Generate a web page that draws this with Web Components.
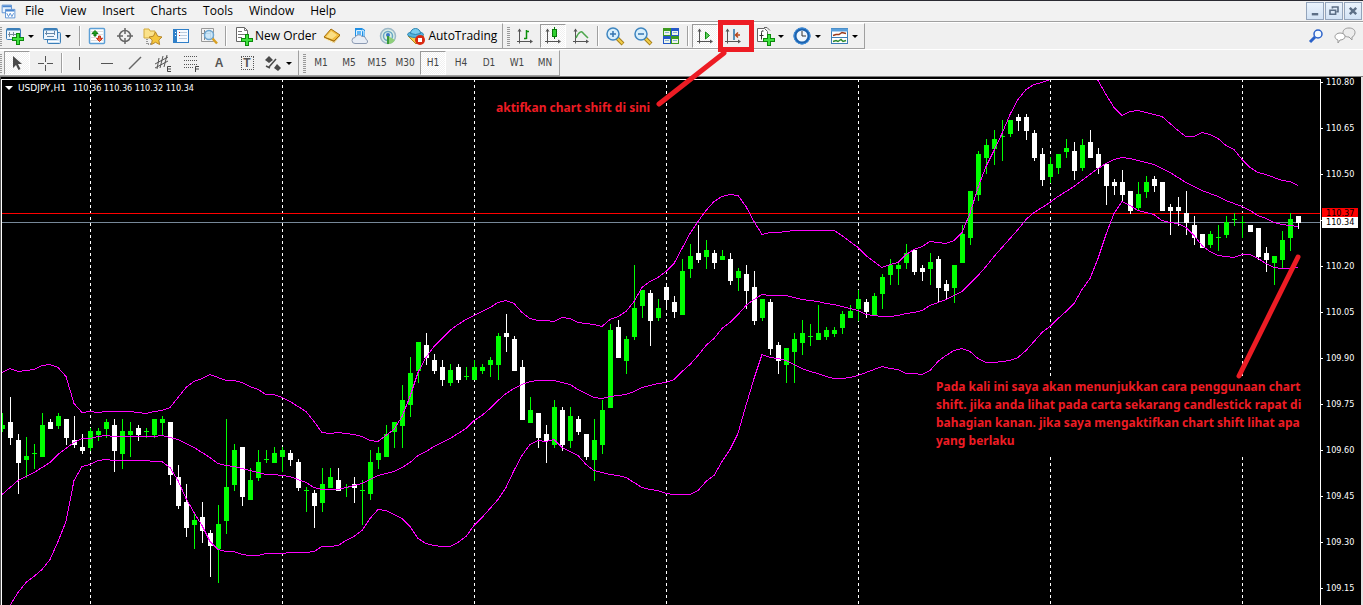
<!DOCTYPE html>
<html lang="en">
<head>
<meta charset="utf-8">
<title>USDJPY,H1</title>
<style>
  html, body {
    margin: 0;
    height: 100%;
    background: #f0f0f0;
  }
</style>
</head>
<body>
<trade-terminal></trade-terminal>

<script>
// ---------- icons, drawn on a 20x20 grid ----------
const axes = '<path d="M4.500 3v14.500M2 15.500h15" stroke="#555" fill="none"/><path d="M2.500 5.500l2-3 2 3zM15 13.500l3 2-3 2z" fill="#555"/>';
const plus = '<path d="M12 8h4v4h4v4h-4v4h-4v-4H8v-4h4z" fill="#0b8a0b"/><path d="M13 9h2v4h4v2h-4v4h-2v-4H9v-2h4z" fill="#3fe03f"/>';
const ICONS = {
  app: '<path d="M2.500 2.500h11v9h-11z" fill="#eaf3fd" stroke="#4b86cf"/><path d="M3 4h10" stroke="#4b86cf" stroke-width="2"/><path d="M6.500 7.500h11v10h-11z" fill="#fff" stroke="#4b86cf"/><path d="M7 9h10" stroke="#4b86cf" stroke-width="2"/><path d="M8 12l2 4 2-4 2 4 2-4" fill="none" stroke="#4b86cf"/>',
  newChart: '<rect x="1.500" y="2.500" width="14" height="11" rx="1" fill="#eef6fd" stroke="#3c7fb8"/><path d="M2 3.500h13" stroke="#3c7fb8" stroke-width="2"/><path d="M4.500 6v5M3 8.500h9M8.500 6v4" stroke="#789" fill="none"/><g transform="translate(-1 -1)">' + plus + '</g>',
  profiles: '<rect x="5.500" y="6.500" width="13" height="11" rx="1" fill="#cfe3f5" stroke="#3c7fb8"/><rect x="1.500" y="2.500" width="14" height="11" rx="1" fill="#eef6fd" stroke="#3c7fb8"/><path d="M2 3.500h13" stroke="#3c7fb8" stroke-width="2"/><path d="M3 7.500h10M4.500 5v4M12.500 5v4M5 10.500h7" stroke="#68a" fill="none"/><path d="M6 15.500h11" stroke="#fff"/>',
  market: '<rect x="2.500" y="2.500" width="15" height="15" rx="1" fill="#fff" stroke="#5c9fd6" stroke-width="1.500"/><path d="M4 5.500h12M4 8.500h12M4 11.500h12M4 14.500h12" stroke="#ddd"/><path d="M8 4.500l3 3H9V10H7V7.500H5z" fill="#1ea01e" stroke="#0f7a0f"/><path d="M12.500 15.500l-3-3h2V10h2v2.500h2z" fill="#f0643c" stroke="#c8321a"/>',
  crosshair: '<circle cx="10" cy="10" r="5.500" fill="none" stroke="#666" stroke-width="1.500"/><path d="M10 2v6M10 12v6M2 10h6M12 10h6" stroke="#666" stroke-width="1.500"/>',
  favorites: '<path d="M1 3h5l1 2h5v7H1z" fill="#fbe28a" stroke="#d2a93a"/><path d="M4 13v5h4" stroke="#444" stroke-dasharray="1 1" fill="none"/><path d="M12.500 6l2.200 4.200 4.300.8-3.200 3 .8 4.500-4.100-2.200-4 2.200.7-4.500L6 11l4.400-.8z" fill="#f5c63c" stroke="#b6862a"/>',
  navigator: '<rect x="2.500" y="3.500" width="15" height="13" fill="#f7fbff" stroke="#2f7fc8" stroke-width="1"/><path d="M4.500 4v12" stroke="#2f7fc8" stroke-width="3"/><path d="M8 6.500h8M8 9.500h8M8 12.500h8" stroke="#bcd"/><path d="M8 6.500h1M8 9.500h1" stroke="#c33"/><path d="M4 6.500h1M4 9.500h1" stroke="#fff"/>',
  tester: '<path d="M2.500 2.500h12v13h-12z" fill="#f3f3f3" stroke="#999"/><path d="M5.500 4v10M11.500 4v8M3 7.500h8" stroke="#888"/><circle cx="10" cy="9" r="4.500" fill="#c4e4f8" fill-opacity=".85" stroke="#6da5cf" stroke-width="1.500"/><path d="M13.500 12.500l4.500 5" stroke="#d8a024" stroke-width="2.500"/>',
  newOrder: '<path d="M3.500 1.500h8l3 3v11h-11z" fill="#fff" stroke="#666"/><path d="M11.500 1.500v3h3M5 5.500h4M5 8.500h7M5 11.500h4" stroke="#777" fill="none"/>' + plus,
  book: '<path d="M2 12l8-8 8 6-6 7z" fill="#b87e16"/><path d="M2 11l7-8 9 6-6 6z" fill="#f2bd3e" stroke="#a46f10"/><path d="M4 11l5-6 6 4-5 4z" fill="#fbdf85"/><path d="M2.500 12.500l9.500 4 6-6" stroke="#fff2c0" fill="none"/>',
  cloud: '<path d="M5 2h7l3 2v7H5z" fill="#1f8fe4"/><path d="M6.500 4.500h5v5h-5zM12 4l2 1v5" fill="#5fb8f8" stroke="#dff2ff"/><path d="M5 17.500a3 3 0 0 1 0-6 4 4 0 0 1 7-1 3.500 3.500 0 0 1 4 3 2 2 0 0 1-1 4z" fill="#e8edf5" stroke="#8d9bb3"/>',
  signals: '<circle cx="10" cy="10" r="7.500" fill="#dbeee6" stroke="#9db8c8" stroke-width="1.500"/><circle cx="10" cy="10" r="4.500" fill="none" stroke="#6aa7c4" stroke-width="1.500"/><path d="M10 10v8a8 8 0 0 0 7-4z" fill="#8fcf7a"/><circle cx="10" cy="9" r="2" fill="#3a78c8"/><path d="M10 10v8" stroke="#3a9a3a" stroke-width="2"/>',
  auto: '<path d="M2 10l8 8 8-8z" fill="#f2cb46" stroke="#b48a1e"/><ellipse cx="9.500" cy="8.500" rx="8" ry="3" fill="#54b4de" stroke="#2b83b0"/><path d="M4.500 7.500a5 5 0 0 1 10 0q-5 2-10 0z" fill="#7accee" stroke="#2b83b0"/><circle cx="14" cy="14" r="5" fill="#d92a12"/><rect x="12" y="12" width="4" height="4" fill="#fff"/>',
  bars: axes + '<path d="M11.500 4v9M9 12.500h2.500M11.500 5.500H14" stroke="#0a8f0a" stroke-width="1.500" fill="none"/>',
  candles: axes + '<path d="M11.500 1v12" stroke="#0a7a0a"/><rect x="9.500" y="3.500" width="4" height="7" fill="#30d030" stroke="#0a7a0a"/>',
  line: axes + '<path d="M5 12c3-7 6-7 7-5l5 5" stroke="#4ca64c" stroke-width="1.500" fill="none"/>',
  zoomIn: '<path d="M12 12l6 6" stroke="#a8801a" stroke-width="4"/><path d="M12 12l5.500 5.500" stroke="#f3cf4b" stroke-width="2"/><circle cx="8" cy="8" r="6" fill="#d8effc" stroke="#3f86c0" stroke-width="1.500"/><path d="M5 8h6M8 5v6" stroke="#3575b0" stroke-width="1.500"/>',
  zoomOut: '<path d="M12 12l6 6" stroke="#a8801a" stroke-width="4"/><path d="M12 12l5.500 5.500" stroke="#f3cf4b" stroke-width="2"/><circle cx="8" cy="8" r="6" fill="#d8effc" stroke="#3f86c0" stroke-width="1.500"/><path d="M5 8h6" stroke="#3575b0" stroke-width="1.500"/>',
  tiles: '<path d="M2 2h8v8H2zM10 10h8v8h-8z" fill="#3d9a1f"/><path d="M10 2h8v8h-8zM2 10h8v8H2z" fill="#2458c8"/><path d="M3 5h6v4H3zM11 5h6v4h-6zM3 13h6v4H3zM11 13h6v4h-6z" fill="#eef5ea"/><path d="M4 6.500h4M12 6.500h4M4 14.500h4M12 14.500h4" stroke="#8ab0d8"/>',
  scroll: axes + '<path d="M10.500 6l4 3.500-4 3.500z" fill="#60d060" stroke="#0a8a0a"/>',
  shift: axes + '<path d="M11 3v11" stroke="#2673a8" stroke-width="1.500"/><path d="M17 9h-4M15 6.500L12.500 9l2.500 2.500" stroke="#b8481a" stroke-width="1.500" fill="none"/>',
  indicators: '<path d="M2.500 2.500h7l3 3v10h-10z" fill="#fff" stroke="#666"/><path d="M9 1.500h3l3 3" stroke="#666" fill="none"/><path d="M8.500 5q-2-1-2 1.500v7M4.500 9.500h4" stroke="#333" fill="none"/>' + plus,
  clock: '<circle cx="10" cy="10" r="7" fill="#eef6fd" stroke="#1c62ae" stroke-width="3"/><circle cx="10" cy="10" r="8" fill="none" stroke="#3f8fdc"/><path d="M10 5v5h4" stroke="#333" fill="none"/>',
  template: '<rect x="2.500" y="2.500" width="16" height="15" fill="#fff" stroke="#3c7fb8"/><path d="M2 4h17" stroke="#5aa0dc" stroke-width="3"/><path d="M3 11.500h15" stroke="#3c7fb8"/><path d="M4 9.500l3-1 3 0 3-2 4 1" stroke="#9a3a1a" fill="none" stroke-width="1.500"/><path d="M4 15.500l3-1 2 1 3-2 2 2 3-1" stroke="#2f8a2f" fill="none" stroke-width="1.500"/>',
  cursor: '<path d="M6 3v12l3-3 2.500 5 2-1-2.500-5h4z" fill="#4a4a4a"/>',
  cross: '<path d="M10.500 3v6M10.500 12v6M3 10.500h6M12 10.500h6" stroke="#555"/>',
  vline: '<path d="M10.500 4v13" stroke="#555"/>',
  hline: '<path d="M4 10.500h12" stroke="#555"/>',
  trend: '<path d="M4 16L16 4" stroke="#666" stroke-width="1.500"/>',
  channel: '<path d="M2 11L15 4M2 15L15 8M6 5L4 16M10 3L7 15M14 2l-3 12" stroke="#555" fill="none"/><path d="M18 13.500h-3.500v5H18M15 16h3" stroke="#444" fill="none"/>',
  fibo: '<path d="M3 3.500h14M3 7.500h14M3 11.500h14M3 14.500h9" stroke="#555" stroke-dasharray="1 1"/><path d="M18 13.500h-3.500V19M15 16h3" stroke="#444" fill="none"/>',
  arrows: '<path d="M6 3l4 4-4 3-4-3zM14 11l4 4-3 3-4-3z" fill="#4a4a4a"/><path d="M13 6l-7 8M3 13l4 2" stroke="#4a4a4a" stroke-width="1.500" fill="none"/>',
  search: '<circle cx="13" cy="8" r="4" fill="#f4faff" stroke="#2b62c9" stroke-width="1.500"/><path d="M10 11l-5 5" stroke="#2b62c9" stroke-width="3"/>',
  chat: '<path d="M14 2c4 0 6 2 6 4.500S18 11 17 11v3l-3-3c-4 0-6-2-6-4.500S10 2 14 2z" fill="#ececec" stroke="#999"/><path d="M5 7c3 0 5 1.500 5 3.500S8 14 5 14l-2 3v-3c-2-.5-3-2-3-3.500S2 7 5 7z" fill="#fff" stroke="#999"/>',
  min: '<path d="M6 14h8" stroke="#5d6f86" stroke-width="3"/>',
  restore: '<path d="M8 7V5h7v6h-2" stroke="#5d6f86" stroke-width="2" fill="none"/><path d="M5 9h7v5H5z" stroke="#5d6f86" stroke-width="2" fill="none"/>',
  close: '<path d="M6 6l8 8M14 6l-8 8" stroke="#5d6f86" stroke-width="3"/>'
};

class ToolIcon extends HTMLElement {
  constructor() {
    super();
    this.attachShadow({ mode: 'open' });
  }

  connectedCallback() {
    this.shadowRoot.innerHTML = `
      <style>
        :host { display: block; width: 20px; height: 20px; flex: none; }
        svg { display: block; width: 100%; height: 100%; overflow: visible; }
      </style>
      <svg viewBox="0 0 20 20" aria-hidden="true">${ICONS[this.getAttribute('name')] || ''}</svg>`;
  }
}
customElements.define('tool-icon', ToolIcon);

class ToolButton extends HTMLElement {
  constructor() {
    super();
    this.attachShadow({ mode: 'open' });
  }

  connectedCallback() {
    const icon = this.getAttribute('icon');
    const pressed = this.hasAttribute('pressed');
    this.shadowRoot.innerHTML = `
      <style>
        :host { display: flex; flex: none; align-items: center; }
        button {
          display: flex;
          align-items: center;
          justify-content: center;
          box-sizing: border-box;
          min-width: 28px;
          height: 24px;
          padding: 0;
          border: 0;
          background: none;
          color: inherit;
          font: inherit;
          white-space: nowrap;
        }
        .drop { width: 37px; justify-content: flex-start; padding-left: 2px; gap: 3px; }
        .text { padding: 0 2px 0 4px; gap: 2px; }
        .pressed {
          min-width: 26px;
          margin: 0 1px;
          border: 1px solid #fff;
          border-top-color: #999;
          border-left-color: #999;
          background: repeating-conic-gradient(#fff 0 25%, #f0f0f0 0 50%) 0 0 / 2px 2px;
        }
        .arrow {
          width: 0;
          border: 3px solid transparent;
          border-top-color: #000;
          border-bottom: 0;
        }
      </style>
      <button type="button" title="${this.getAttribute('label') || ''}"
        class="${this.hasAttribute('drop') ? 'drop' : ''} ${this.hasAttribute('wide') ? 'text' : ''} ${pressed ? 'pressed' : ''}">
        ${icon ? `<tool-icon name="${icon}"></tool-icon>` : ''}
        <slot></slot>
        ${this.hasAttribute('drop') ? '<span class="arrow"></span>' : ''}
      </button>`;
  }
}
customElements.define('tool-button', ToolButton);

class ToolSeparator extends HTMLElement {
  constructor() {
    super();
    this.attachShadow({ mode: 'open' }).innerHTML = `
      <style>
        :host { display: flex; flex: none; width: 6px; justify-content: center; align-items: center; }
        i { width: 1px; height: 20px; background: #a0a0a0; border-right: 1px solid #fff; }
      </style>
      <i></i>`;
  }
}
customElements.define('tool-separator', ToolSeparator);

// one docked group of buttons with a grip on its left
class ToolGroup extends HTMLElement {
  constructor() {
    super();
    this.attachShadow({ mode: 'open' }).innerHTML = `
      <style>
        :host {
          display: flex;
          box-sizing: border-box;
          height: 26px;
          border-right: 1px solid #a0a0a0;
          border-bottom: 1px solid #a0a0a0;
          border-top: 1px solid #fff;
        }
        .grip {
          flex: none;
          width: 3px;
          margin: 3px 1px 2px 4px;
          background: repeating-linear-gradient(#999 0 1px, #f0f0f0 1px 2px);
        }
        :host([first]) .grip { width: 2px; margin-left: 0; }
      </style>
      <div class="grip"></div>
      <slot></slot>`;
  }
}
customElements.define('tool-group', ToolGroup);

class AppMenu extends HTMLElement {
  constructor() {
    super();
    this.attachShadow({ mode: 'open' });
  }

  connectedCallback() {
    const items = this.getAttribute('items').split(',');
    this.shadowRoot.innerHTML = `
      <style>
        :host {
          display: flex;
          align-items: center;
          box-sizing: border-box;
          height: 22px;
          border-top: 1px solid #2b2b33;
          border-bottom: 1px solid #a0a0a0;
          background: #f2f2f2;
        }
        nav { display: flex; flex: 1; }
        .app { width: 17px; height: 17px; }
        nav button {
          border: 0;
          padding: 0 8px;
          background: none;
          color: #000;
          font: 12px/18px "Open Sans", "Noto Sans", sans-serif;
        }
        .window { display: flex; gap: 1px; padding-right: 1px; }
        .window button {
          box-sizing: border-box;
          width: 18px;
          height: 18px;
          padding: 0;
          border: 1px solid #93a4bb;
          background: linear-gradient(#eaf3fc, #d3e3f5);
        }
        .window tool-icon { width: 16px; height: 16px; }
      </style>
      <tool-icon class="app" name="app"></tool-icon>
      <nav>${items.map((item) => `<button type="button">${item}</button>`).join('')}</nav>
      <div class="window">
        <button type="button" title="Minimize"><tool-icon name="min"></tool-icon></button>
        <button type="button" title="Restore"><tool-icon name="restore"></tool-icon></button>
        <button type="button" title="Close"><tool-icon name="close"></tool-icon></button>
      </div>`;
  }
}
customElements.define('app-menu', AppMenu);

// ---------- chart data ----------
// one candle per hour: high, top of body, bottom of body, low, 1 = up
const CANDLES = [
  [413,425,429,432,1],[397,422,438,445,0],[434,440,463,494,0],[437,456,460,478,1],[444,453,454,469,1],
  [413,425,457,457,1],[419,422,429,429,0],[413,416,426,429,1],[419,419,438,445,0],[416,440,445,448,0],
  [434,447,451,454,0],[428,431,448,451,1],[428,431,435,441,1],[419,422,429,438,1],[419,425,451,472,0],
  [419,431,454,469,1],[422,431,435,457,1],[425,428,435,441,0],[428,431,432,438,1],[419,419,435,438,1],
  [416,419,423,435,1],[422,422,475,485,0],[465,477,506,509,0],[484,502,528,537,0],[514,520,525,549,1],
  [502,517,531,543,0],[530,533,546,577,0],[505,524,549,583,1],[419,487,521,534,1],[444,450,485,491,1],
  [447,447,497,506,0],[468,480,500,500,1],[450,462,478,481,1],[450,459,460,463,1],[447,453,463,463,1],
  [447,450,457,472,1],[450,453,460,466,0],[459,462,488,491,0],[487,490,491,512,1],[490,493,506,528,0],
  [468,484,503,512,1],[468,477,488,488,1],[468,480,491,491,0],[484,487,488,497,1],[477,484,488,503,0],
  [480,490,491,525,1],[450,462,494,500,1],[447,453,460,469,1],[425,434,457,457,1],[422,422,432,448,1],
  [385,400,426,448,1],[357,373,405,417,1],[342,342,371,383,1],[333,345,358,365,0],[354,360,371,374,0],
  [360,367,380,386,0],[364,370,383,386,1],[364,367,380,383,0],[367,376,377,380,1],[360,367,380,380,1],
  [364,367,371,374,1],[357,360,365,377,1],[333,336,365,380,1],[314,333,337,352,0],[336,339,371,371,0],
  [360,367,420,420,0],[397,410,423,423,1],[413,413,438,448,0],[425,434,441,463,0],[400,407,445,448,1],
  [407,410,445,451,0],[407,416,441,448,1],[416,419,432,435,0],[434,434,457,460,0],[419,440,460,481,1],
  [400,410,445,454,1],[324,330,408,408,1],[320,327,358,358,0],[336,339,361,374,1],[265,308,337,340,1],
  [290,290,306,318,1],[290,293,321,346,0],[299,308,318,321,1],[284,287,300,308,0],[296,302,312,318,0],
  [259,271,315,315,1],[244,256,269,278,1],[225,253,260,263,0],[240,250,257,269,1],[250,253,263,269,0],
  [250,256,260,260,1],[253,259,281,285,0],[268,271,278,291,1],[265,274,291,309,0],[271,287,321,325,0],
  [299,299,318,321,1],[299,302,349,355,0],[342,345,361,374,0],[348,348,365,383,1],[333,339,352,383,1],
  [320,333,343,355,1],[324,336,337,346,1],[305,333,340,340,1],[327,330,337,340,1],[327,330,334,337,1],
  [311,314,328,334,1],[305,311,318,318,1],[290,299,309,321,1],[299,302,312,318,0],[293,296,315,315,1],
  [274,277,294,309,1],[259,265,275,285,1],[262,265,269,285,1],[244,253,263,269,1],[250,250,272,275,0],
  [265,268,272,281,0],[253,262,269,285,1],[256,259,288,302,0],[280,284,291,299,0],[265,265,288,303,1],
  [225,234,263,263,1],[191,191,238,245,1],[151,154,195,201,1],[139,145,158,174,1],[130,139,149,165,1],
  [120,136,137,161,1],[120,120,134,137,1],[114,117,121,131,0],[114,117,131,140,0],[130,133,158,161,0],
  [148,154,180,186,0],[157,164,177,183,1],[154,154,168,174,1],[139,148,152,158,1],[142,151,171,180,0],
  [139,145,168,171,1],[130,142,158,158,0],[148,154,168,174,0],[164,164,186,205,0],[179,182,186,195,0],
  [170,182,195,201,0],[191,191,211,214,0],[182,194,208,210,1],[176,182,192,198,1],[176,179,186,192,0],
  [182,182,211,211,0],[204,207,211,235,0],[197,207,211,226,0],[191,213,223,235,0],[216,225,238,245,0],
  [234,234,248,248,0],[231,234,245,248,1],[225,237,238,251,1],[216,222,235,238,1],[213,219,220,226,1],
  [216,222,223,238,1],[225,225,232,232,0],[228,228,257,260,0],[247,253,260,272,0],[256,256,263,285,1],
  [231,240,260,268,1],[213,219,238,251,1],[216,216,223,229,0]
];

// Bollinger bands, one value per candle
const BANDS = [
  [372,368,371,370,369,365,364,367,376,403,412,411,412,411,411,411,411,412,413,411,410,407,397,387,381,378,374,377,380,380,382,
   386,389,394,394,397,401,406,411,421,432,433,432,433,434,436,440,441,435,429,416,396,372,357,346,338,330,324,319,315,311,
   307,302,300,303,312,318,320,320,321,317,318,322,323,324,326,319,316,311,301,287,281,277,271,263,248,233,221,210,201,196,
   194,195,206,221,234,232,232,231,230,230,230,230,230,230,235,241,247,255,261,267,264,262,254,249,246,241,242,243,240,232,
   213,187,166,150,133,114,99,89,84,82,79,72,66,64,66,70,80,94,107,115,111,110,112,114,116,123,130,136,136,132,
   134,138,145,149,159,167,172,174,177,180,181,185],
  [494,487,480,476,472,467,462,454,448,442,438,438,436,435,436,436,436,436,436,436,435,437,439,443,447,452,457,463,465,466,468,
   470,472,474,474,475,476,479,482,487,489,489,489,487,485,483,479,475,473,471,467,462,455,451,446,442,438,433,428,420,415,
   408,400,393,388,384,381,380,380,380,382,384,389,393,397,398,396,395,394,391,387,385,383,382,379,371,364,355,345,338,328,
   322,314,305,299,294,295,295,295,297,299,300,301,303,304,306,308,310,314,315,316,316,315,313,312,310,305,302,299,295,291,
   283,275,266,256,247,238,229,219,212,207,202,196,191,186,180,174,168,163,159,157,158,160,162,164,168,172,177,182,186,190,
   193,196,200,203,206,210,215,218,222,224,225,226],
  [616,605,592,582,576,569,559,541,521,480,466,464,460,459,460,460,460,460,460,461,461,467,480,498,512,525,541,549,551,551,554,
   555,555,553,553,553,552,552,552,551,546,546,545,540,536,530,518,509,510,514,518,526,538,543,545,546,546,542,536,525,517,
   508,499,487,470,455,444,440,441,439,447,451,455,464,470,472,474,475,477,482,487,489,490,493,494,494,494,490,481,475,461,
   449,433,405,378,354,357,358,360,364,368,371,373,376,378,378,377,375,372,369,366,368,369,373,373,374,370,361,355,350,348,
   351,358,362,362,361,360,357,350,341,332,326,318,311,303,289,278,258,234,213,201,205,210,212,214,220,222,223,227,235,245,
   251,255,256,257,254,254,258,263,267,268,268,267]
];

const DAYS = [90, 282, 474, 666, 858, 1050, 1242];
const PRICES = ['110.80', '110.65', '110.50', '', '110.20', '110.05', '109.90', '109.75', '109.60', '109.45', '109.30', '109.15'];
const candleX = (i) => 2 + i * 8;

class PriceChart extends HTMLElement {
  constructor() {
    super();
    this.attachShadow({ mode: 'open' });
  }

  connectedCallback() {
    const days = DAYS.map((x) => `<path d="M${x + 0.5} 79V605"/>`).join('');
    const candles = CANDLES.map(([high, top, bottom, low, up], i) => {
      const x = candleX(i);
      return `<path fill="${up ? '#0f0' : '#fff'}" d="M${x} ${high}h1V${low}h-1zM${x - 2} ${top}h5V${bottom}h-5z"/>`;
    }).join('');
    const bands = BANDS.map((band) => `<polyline points="${band.map((y, i) => `${candleX(i)},${y + 0.5}`).join(' ')}"/>`).join('');

    this.shadowRoot.innerHTML = `
      <style>
        :host {
          display: grid;
          grid-template-columns: 1fr 40px;
          grid-template-rows: minmax(0, 1fr);
          position: relative;
          box-sizing: border-box;
          padding-top: 2px;
          border-left: 1px solid #555;
          border-right: 2px solid #e3e3e3;
          background: #000;
          color: #fff;
          font: 9px/12px "DejaVu Sans Condensed", "Liberation Sans", sans-serif;
          overflow: hidden;
        }
        .plot {
          position: relative;
          min-width: 0;
          min-height: 0;
          border: 1px solid #fff;
          border-bottom: 0;
        }
        .plot svg { position: absolute; width: 100%; height: 100%; }
        .title {
          position: absolute;
          top: 2px;
          left: 3px;
          display: flex;
          align-items: center;
          gap: 5px;
          margin: 0;
          font: inherit;
          white-space: nowrap;
        }
        .title i { border: 4px solid transparent; border-top-color: #fff; border-bottom: 0; }
        .title b { margin-right: 2px; font: 9px/12px "DejaVu Sans", sans-serif; }
        .axis {
          position: relative;
          display: grid;
          grid-auto-rows: 46px;
          align-content: start;
          min-height: 0;
          margin-top: -3px;
        }
        .axis div { display: flex; gap: 3px; height: 12px; align-items: center; }
        .axis div::before { content: ""; width: 2px; height: 1px; background: #fff; }
        .tag { position: absolute; left: 1px; width: 32px; padding-left: 4px; height: 10px; line-height: 10px; }
        .ask { top: 132px; background: #f00; color: #000; }
        .bid { top: 141px; background: #fff; color: #000; height: 11px; line-height: 11px; }
      </style>
      <div class="plot">
        <svg viewBox="2 80 1318 525" preserveAspectRatio="none" shape-rendering="crispEdges" role="img" aria-label="USDJPY,H1">
          <g stroke="#fff" stroke-dasharray="3 3">${days}</g>
          <path d="M2 213.500H1320" stroke="#f00"/>
          <path d="M2 222.500H1320" stroke="#778899"/>
          ${candles}
          <g fill="none" stroke="#f0f">${bands}</g>
        </svg>
        <h1 class="title"><i></i><b>${this.getAttribute('symbol')}</b><span>${this.getAttribute('quotes')}</span></h1>
      </div>
      <div class="axis">
        ${PRICES.map((price) => `<div>${price}</div>`).join('')}
        <span class="tag ask">${this.getAttribute('ask')}</span>
        <span class="tag bid">${this.getAttribute('bid')}</span>
      </div>
      <slot></slot>`;
  }
}
customElements.define('price-chart', PriceChart);

// red note laid over the chart
class ChartNote extends HTMLElement {
  constructor() {
    super();
    this.attachShadow({ mode: 'open' }).innerHTML = `
      <style>
        :host {
          display: block;
          position: absolute;
          background: #000;
          color: #ed1c24;
          font: bold 12px/18px "Noto Sans", "Open Sans", sans-serif;
        }
      </style>
      <slot></slot>`;
  }
}
customElements.define('chart-note', ChartNote);

class TradeTerminal extends HTMLElement {
  constructor() {
    super();
    this.attachShadow({ mode: 'open' }).innerHTML = `
      <style>
        :host {
          display: flex;
          flex-direction: column;
          position: relative;
          height: 100vh;
          overflow: hidden;
          background: #f0f0f0;
          color: #000;
          font: 12px/16px "Open Sans", "Noto Sans", sans-serif;
        }
        .row { display: flex; flex: none; border-top: 1px solid #fff; }
        .row.last { height: 26px; border-bottom: 1px solid #808080; }
        .standard { padding-right: 3px; }
        .frames { color: #444; font: 10px/12px "DejaVu Sans Condensed", sans-serif; }
        .letter { color: #555; font: bold 12px/16px "Liberation Sans", sans-serif; }
        .boxed { width: 11px; border: 1px dotted #555; line-height: 12px; }
        .side { display: flex; margin-left: auto; padding-right: 4px; gap: 2px; }
        price-chart { flex: 1; min-height: 0; }
        .top-note { top: 22px; left: 495px; }
        .side-note { top: 301px; left: 935px; width: 380px; padding-bottom: 7px; }
        .marks { position: absolute; top: 0; left: 0; width: 100%; height: 100%; pointer-events: none; }
      </style>
      <app-menu items="File,View,Insert,Charts,Tools,Window,Help"></app-menu>
      <div class="row">
        <tool-group class="standard" first>
          <tool-button icon="newChart" drop label="New chart"></tool-button>
          <tool-button icon="profiles" drop label="Profiles"></tool-button>
          <tool-separator></tool-separator>
          <tool-button icon="market" label="Market Watch"></tool-button>
          <tool-button icon="crosshair" label="Data Window"></tool-button>
          <tool-button icon="favorites" label="Navigator"></tool-button>
          <tool-button icon="navigator" label="Terminal"></tool-button>
          <tool-button icon="tester" label="Strategy Tester"></tool-button>
          <tool-separator></tool-separator>
          <tool-button icon="newOrder" wide>New Order</tool-button>
          <tool-button icon="book" label="MetaEditor"></tool-button>
          <tool-button icon="cloud" label="Hosting"></tool-button>
          <tool-button icon="signals" label="Signals"></tool-button>
          <tool-button icon="auto" wide>AutoTrading</tool-button>
        </tool-group>
        <tool-group>
          <tool-button icon="bars" label="Bar Chart"></tool-button>
          <tool-button icon="candles" pressed label="Candlesticks"></tool-button>
          <tool-button icon="line" label="Line Chart"></tool-button>
          <tool-separator></tool-separator>
          <tool-button icon="zoomIn" label="Zoom In"></tool-button>
          <tool-button icon="zoomOut" label="Zoom Out"></tool-button>
          <tool-button icon="tiles" label="Tile Windows"></tool-button>
          <tool-separator></tool-separator>
          <tool-button icon="scroll" pressed label="Auto Scroll"></tool-button>
          <tool-button icon="shift" label="Chart Shift"></tool-button>
          <tool-separator></tool-separator>
          <tool-button icon="indicators" drop label="Indicators"></tool-button>
          <tool-button icon="clock" drop label="Periods"></tool-button>
          <tool-button icon="template" drop label="Templates"></tool-button>
        </tool-group>
        <div class="side">
          <tool-button icon="search" label="Search"></tool-button>
          <tool-button icon="chat" label="Chat"></tool-button>
        </div>
      </div>
      <div class="row last">
        <tool-group first>
          <tool-button icon="cursor" pressed label="Cursor"></tool-button>
          <tool-button icon="cross" label="Crosshair"></tool-button>
          <tool-separator></tool-separator>
          <tool-button icon="vline" label="Vertical Line"></tool-button>
          <tool-button icon="hline" label="Horizontal Line"></tool-button>
          <tool-button icon="trend" label="Trendline"></tool-button>
          <tool-button icon="channel" label="Equidistant Channel"></tool-button>
          <tool-button icon="fibo" label="Fibonacci"></tool-button>
          <tool-button label="Text"><span class="letter">A</span></tool-button>
          <tool-button label="Text Label"><span class="letter boxed">T</span></tool-button>
          <tool-button icon="arrows" drop label="Arrows"></tool-button>
        </tool-group>
        <tool-group class="frames">
          <tool-button>M1</tool-button>
          <tool-button>M5</tool-button>
          <tool-button>M15</tool-button>
          <tool-button>M30</tool-button>
          <tool-button pressed>H1</tool-button>
          <tool-button>H4</tool-button>
          <tool-button>D1</tool-button>
          <tool-button>W1</tool-button>
          <tool-button>MN</tool-button>
        </tool-group>
      </div>
      <price-chart symbol="USDJPY,H1" quotes="110.36 110.36 110.32 110.34" ask="110.37" bid="110.34">
        <chart-note class="top-note">aktifkan chart shift di sini</chart-note>
        <chart-note class="side-note">Pada kali ini saya akan menunjukkan cara penggunaan chart shift. jika anda lihat pada carta sekarang candlestick rapat di bahagian kanan. jika saya mengaktifkan chart shift lihat apa yang berlaku</chart-note>
      </price-chart>
      <svg class="marks" fill="none" stroke="#ed1c24" stroke-width="5" stroke-linecap="round" aria-hidden="true">
        <path d="M720.500 22.500h31v27h-31z" stroke-linecap="butt"/>
        <path d="M724 53L659 104M1298 257L1239 376"/>
      </svg>`;
  }
}
customElements.define('trade-terminal', TradeTerminal);
</script>
</body>
</html>
